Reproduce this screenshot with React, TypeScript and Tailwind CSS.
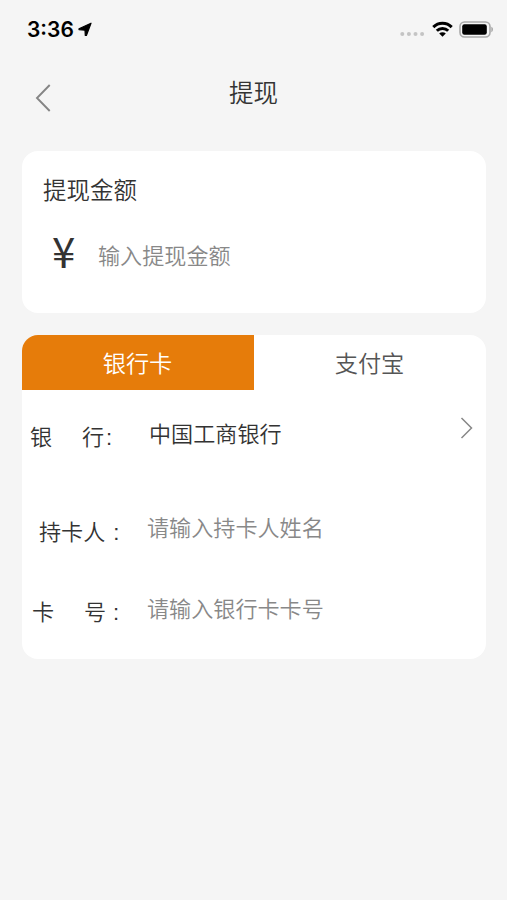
import { useState } from 'react';
import clsx from 'clsx';

type PayoutMethod = 'bank' | 'alipay';

const methods: { key: PayoutMethod; label: string }[] = [
  { key: 'bank', label: '银行卡' },
  { key: 'alipay', label: '支付宝' },
];

function StatusBar() {
  return (
    <div className="flex h-[58px] items-center pr-[13px] pl-[27px] text-black">
      <span className="w-[46px] font-['Inter','Liberation_Sans',sans-serif] text-[21px] leading-none font-semibold">
        3:36
      </span>
      <svg className="ml-[5px] h-[15px] w-[14px]" viewBox="0 0 14 15" fill="currentColor">
        <path
          d="M13 1.200 8.400 13.500 7.300 13.500 7 8.200 1 7.600V6.700Z"
          stroke="currentColor"
          strokeWidth="1.200"
          strokeLinejoin="round"
        />
      </svg>
      <svg className="mt-[10px] ml-auto h-[4px] w-[25px]" viewBox="0 0 25 4" fill="#c4c4c4">
        <circle cx="2.3" cy="2" r="2" />
        <circle cx="8.9" cy="2" r="2" />
        <circle cx="15.5" cy="2" r="2" />
        <circle cx="22.1" cy="2" r="2" />
      </svg>
      <svg className="ml-[7px] h-[16px] w-[21px]" viewBox="0 0 21 16" fill="none" stroke="currentColor" strokeWidth="3">
        <path d="M1.3 6.1a13 13 0 0 1 18.4 0" />
        <path d="M4.8 9.8a8.1 8.1 0 0 1 11.4 0" />
        <path d="M10.5 15.8 7.2 12.5a4.7 4.7 0 0 1 6.6 0Z" fill="currentColor" stroke="none" />
      </svg>
      <svg className="ml-[6px] h-[17px] w-[35px]" viewBox="0 0 35 17">
        <rect x="1" y="1" width="30" height="15" rx="4.5" fill="none" stroke="#a9a9a9" strokeWidth="1.6" />
        <rect x="3.2" y="3.2" width="24.6" height="10.6" rx="2.2" fill="currentColor" />
        <path d="M32.4 5.8c2 .8 2 4.600 0 5.400Z" fill="#a0a0a0" />
      </svg>
    </div>
  );
}

export default function App() {
  const [method, setMethod] = useState<PayoutMethod>('bank');

  return (
    <div className="min-h-[900px] w-[507px] bg-[#f5f5f5] font-['Liberation_Sans','Noto_Sans_CJK_SC',sans-serif] text-[22.1px] leading-8 font-[350] text-[#333]">
      <StatusBar />

      <header className="grid h-[93px] grid-cols-[1fr_auto_1fr] items-start px-[35px] pt-[20px]">
        <button className="mt-[5px] justify-self-start" aria-label="返回">
          <svg className="h-[30px] w-[16px]" viewBox="0 0 16 30" fill="none" stroke="#858585" strokeWidth="1.9">
            <path d="M14.700 2 2 15l12.700 13" />
          </svg>
        </button>
        <h1 className="text-[24.5px]">提现</h1>
      </header>

      <main className="mr-[21px] ml-[22px] flex flex-col gap-[22px]">
        <section className="h-[162px] rounded-2xl bg-white px-[21px] pt-[24px]">
          <h2 className="text-[23.5px]">提现金额</h2>
          <div className="mt-[34px] flex items-center">
            <span className="-mt-[14px] w-[55px] pl-[9px] font-['Noto_Sans_CJK_SC',sans-serif] text-[42px] leading-8 font-normal">
              ¥
            </span>
            <input className="h-8 w-[300px] outline-none placeholder:text-[#888]" placeholder="输入提现金额" />
          </div>
        </section>

        <section className="h-[324px] overflow-hidden rounded-2xl bg-white">
          <div className="grid h-[55px] grid-cols-2">
            {methods.map(({ key, label }) => (
              <button
                key={key}
                onClick={() => setMethod(key)}
                className={clsx(
                  'pt-[2px] pr-px text-[23.2px]',
                  method === key ? 'bg-[#e67c0a] text-white' : 'text-[#555]',
                )}
              >
                {label}
              </button>
            ))}
          </div>

          <div className="flex pt-[29px] pr-[13px] pl-[8px]">
            <div className="mt-[3px] flex w-[119px]">
              <span className="w-[52px]">银</span>
              <span>行</span>
              <span className="ml-[2px]">:</span>
            </div>
            <span>中国工商银行</span>
            <svg className="mt-[-3px] ml-auto h-[24px] w-[13px]" viewBox="0 0 13 24" fill="none" stroke="#888" strokeWidth="1.500">
              <path d="M1.500 2 11.500 12 1.500 22" />
            </svg>
          </div>

          <div className="flex pt-[59px] pl-[17px]">
            <div className="mt-[4px] flex w-[108px]">
              <span>持卡人</span>
              <span className="ml-[8px]">:</span>
            </div>
            <input className="h-8 w-[300px] outline-none placeholder:text-[#888]" placeholder="请输入持卡人姓名" />
          </div>

          <div className="flex pt-[45px] pl-[10px]">
            <div className="mt-[3px] flex w-[115px]">
              <span className="w-[52px]">卡</span>
              <span>号</span>
              <span className="ml-[7px]">:</span>
            </div>
            <input className="h-8 w-[300px] outline-none placeholder:text-[#888]" placeholder="请输入银行卡卡号" />
          </div>
        </section>
      </main>
    </div>
  );
}
